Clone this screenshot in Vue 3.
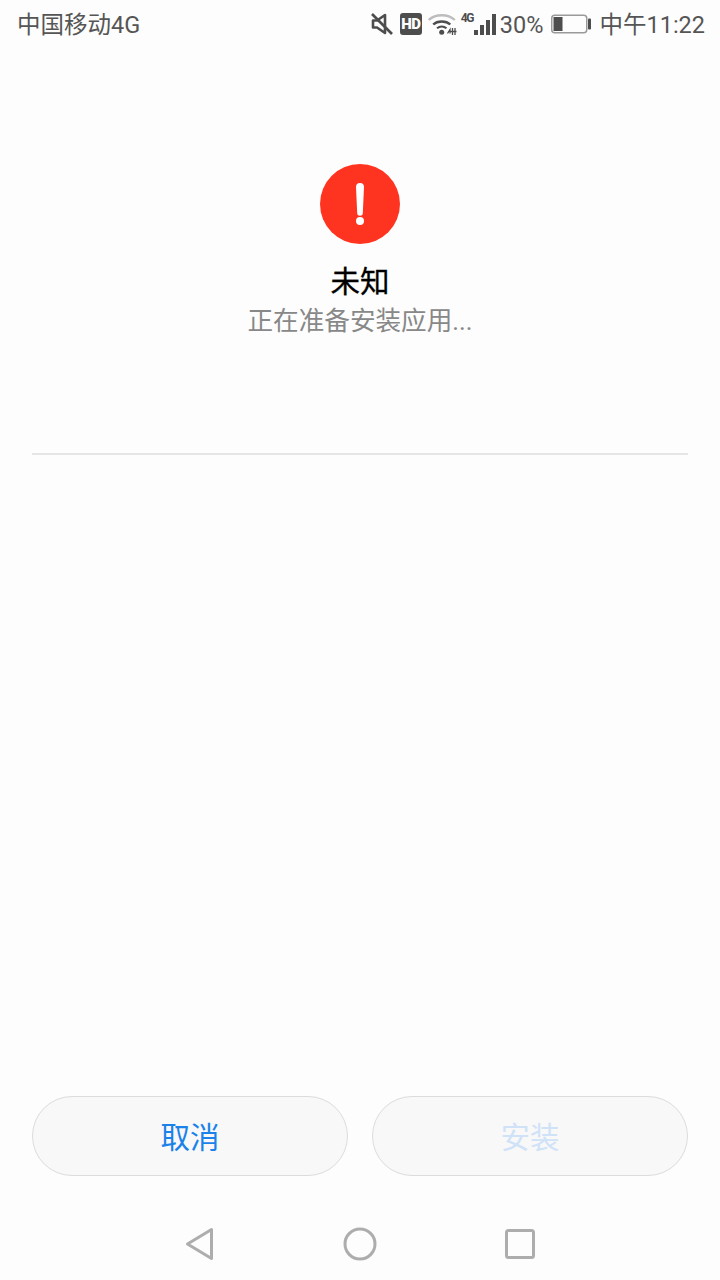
<script setup>
const title = '未知'
const subtitle = '正在准备安装应用...'
const bars = [5, 10, 15, 21]
</script>

<template>
  <div class="page">
    <header class="status">
      <span class="carrier">中国移动4G</span>
      <div class="indicators">
        <svg class="mute" width="22" height="22" viewBox="0 0 22 22" fill="none">
          <path d="M2 7.500h4l8-5.500v18l-8-5.500H2z" stroke="#4d4d4d" stroke-width="2.600" stroke-linejoin="round" />
          <path d="M1 1 21 21" stroke="#4d4d4d" stroke-width="2.600" />
        </svg>
        <span class="hd">HD</span>
        <svg class="wifi" width="29" height="22" viewBox="0 0 29 22" fill="none">
          <path d="M0.800 7C7.500 0.600 20 0.600 26.800 7" stroke="#bdbdbd" stroke-width="2.400" />
          <path d="M5.200 11.500C9.500 7.400 18 7.400 22.300 11.500" stroke="#4d4d4d" stroke-width="2.400" />
          <path d="M9 15.300c2.800-2.300 6.700-2.300 9.500 0" stroke="#4d4d4d" stroke-width="2" />
          <circle cx="13.700" cy="19.300" r="2.500" fill="#4d4d4d" />
          <path d="M19.500 20.500l2.500-4v4M24.500 15v7M27 15v7M22.500 18.500h6" stroke="#4d4d4d" stroke-width="1.300" />
        </svg>
        <span class="net">4G</span>
        <div class="signal">
          <i v-for="h in bars" :key="h" :style="{ height: h + 'px' }"></i>
        </div>
        <span class="pct">30%</span>
        <svg class="battery" width="40" height="20" viewBox="0 0 40 20" fill="none">
          <rect x="0.750" y="1.250" width="35" height="17.500" rx="3" stroke="#9a9a9a" stroke-width="1.500" />
          <rect x="2.500" y="3" width="9" height="14" fill="#4d4d4d" />
          <rect x="37" y="4.500" width="3" height="11" rx="1" fill="#4d4d4d" />
        </svg>
        <span class="clock">中午11:22</span>
      </div>
    </header>

    <section class="summary">
      <svg class="alert" width="80" height="80" viewBox="0 0 80 80">
        <circle cx="40" cy="40" r="40" fill="#ff3420" />
        <path d="M36 23a4 4 0 0 1 8 0l-1.200 26a2.800 2.800 0 0 1-5.600 0z" fill="#fff" />
        <circle cx="40" cy="57" r="4" fill="#fff" />
      </svg>
      <h1 class="title">{{ title }}</h1>
      <p class="subtitle">{{ subtitle }}</p>
    </section>

    <div class="divider"></div>
    <div class="spacer"></div>

    <div class="actions">
      <button class="btn cancel" type="button">取消</button>
      <button class="btn install" type="button">安装</button>
    </div>

    <nav class="nav">
      <svg class="back" width="32" height="34" viewBox="0 0 32 34" fill="none">
        <path d="M3.500 17 27.500 2.500v29z" stroke="#adadad" stroke-width="3" stroke-linejoin="round" />
      </svg>
      <svg class="home" width="34" height="34" viewBox="0 0 34 34" fill="none">
        <circle cx="17" cy="17" r="15" stroke="#adadad" stroke-width="3" />
      </svg>
      <svg width="30" height="30" viewBox="0 0 30 30" fill="none">
        <rect x="1.500" y="1.500" width="27" height="27" rx="2" stroke="#adadad" stroke-width="3" />
      </svg>
    </nav>
  </div>
</template>

<style>
html, body { margin: 0; background: #fdfdfd; }
</style>

<style scoped>
.page {
  width: 720px;
  height: 1280px;
  display: flex;
  flex-direction: column;
  background: #fdfdfd;
  font-family: Roboto, "Noto Sans CJK SC", sans-serif;
}
.status {
  height: 50px;
  flex: none;
  display: flex;
  align-items: center;
  justify-content: space-between;
  padding: 0 15px 0 17px;
  color: #555;
  font-size: 23.500px;
}
.indicators { display: flex; align-items: center; }
.carrier, .pct, .clock { line-height: 50px; }
.indicators svg, .hd { margin-bottom: 2px; }
.mute { margin-right: 7px; }
.hd {
  width: 22px;
  height: 22px;
  margin-right: 6px;
  border-radius: 3px;
  background: #4d4d4d;
  color: #fdfdfd;
  font-size: 15px;
  font-weight: 900;
  letter-spacing: -0.500px;
  line-height: 22px;
  text-align: center;
}
.wifi { margin-right: 4px; }
.net {
  width: 12px;
  margin-bottom: 15px;
  font-size: 12px;
  font-weight: 700;
  letter-spacing: -1.500px;
  line-height: 12px;
  color: #4d4d4d;
  white-space: nowrap;
}
.signal {
  width: 23px;
  height: 21px;
  margin-bottom: 2px;
  display: flex;
  align-items: flex-end;
  justify-content: flex-end;
  gap: 2px;
  margin-right: 4px;
}
.signal i { width: 4px; background: #4d4d4d; }
.pct { margin-right: 8px; }
.battery { margin-right: 8px; }
.summary {
  flex: none;
  display: flex;
  flex-direction: column;
  align-items: center;
  padding-top: 114px;
}
.alert { display: block; }
.title {
  margin: 16px 0 0;
  font-size: 29.500px;
  font-weight: 400;
  -webkit-text-stroke: 0.300px #000;
  line-height: 44px;
  color: #000;
}
.subtitle {
  margin: -1px 0 0;
  font-size: 25.600px;
  line-height: 36px;
  color: #888;
}
.divider {
  flex: none;
  height: 2px;
  margin: 114px 32px 0;
  background: #e6e6e6;
}
.spacer { flex: 1; }
.actions {
  flex: none;
  display: flex;
  gap: 24px;
  padding: 0 32px;
}
.btn {
  flex: 1;
  height: 80px;
  padding: 0 0 2px;
  border: 1px solid #dcdcdc;
  border-radius: 40px;
  background: #f8f8f8;
  font-family: inherit;
  font-size: 29.500px;
}
.cancel { color: #1a82e8; }
.install { color: #cfe2f7; }
.nav {
  flex: none;
  height: 104px;
  box-sizing: border-box;
  padding: 32px 0 0 184px;
  display: flex;
  align-items: center;
}
.back { margin-right: 127px; }
.home { margin-right: 128px; }
</style>
